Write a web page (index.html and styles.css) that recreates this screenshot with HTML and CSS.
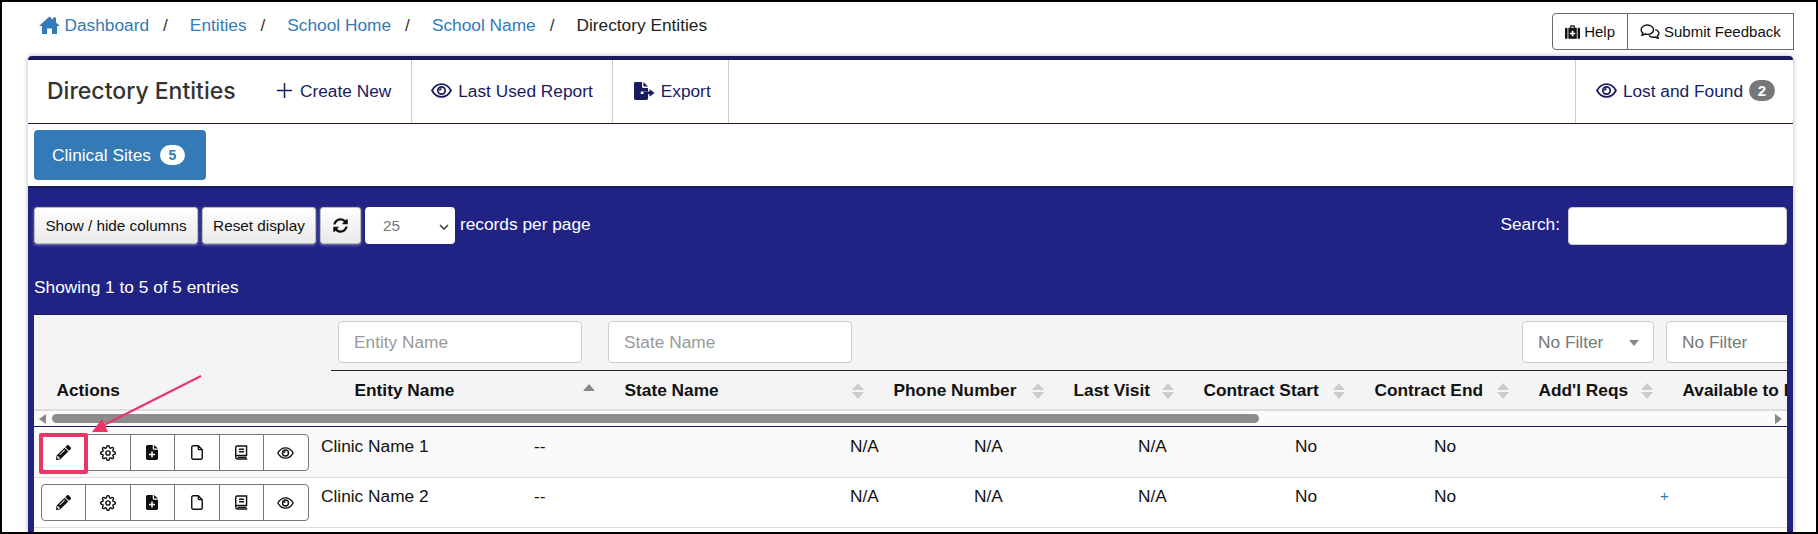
FILE: index.html
```html
<!DOCTYPE html>
<html lang="en">
<head>
<meta charset="utf-8">
<title>Directory Entities</title>
<link rel="stylesheet" href="styles.css">
</head>
<body>
<svg class="defs" xmlns="http://www.w3.org/2000/svg">
  <symbol id="i-home" viewBox="0 0 21 18"><path d="M10.500 .5L0 10h3v8h5v-5.500h5V18h5v-8h3l-4-3.600V1.500h-3v2.300z"/></symbol>
  <symbol id="i-pencil" viewBox="0 0 512 512"><path d="M497.9 142.1l-46.1 46.1c-4.7 4.7-12.3 4.7-17 0l-111-111c-4.7-4.7-4.7-12.3 0-17l46.1-46.1c18.7-18.7 49.1-18.7 67.9 0l60.1 60.1c18.8 18.7 18.8 49.1 0 67.9zM284.2 99.8L21.6 362.4.4 483.9c-2.9 16.4 11.4 30.6 27.8 27.8l121.5-21.3 262.6-262.6c4.7-4.7 4.7-12.3 0-17l-111-111c-4.8-4.7-12.4-4.7-17.1 0zM124.1 339.9c-5.5-5.5-5.5-14.3 0-19.8l154-154c5.5-5.5 14.3-5.5 19.8 0s5.5 14.3 0 19.8l-154 154c-5.5 5.5-14.3 5.5-19.8 0zM88 424h48v36.3l-64.5 11.3-31.1-31.1L51.7 376H88v48z"/></symbol>
  <symbol id="i-sync" viewBox="0 0 512 512"><path d="M370.72 133.28C339.458 104.008 298.888 87.962 255.848 88c-77.458.068-144.328 53.178-162.791 126.85-1.344 5.363-6.122 9.15-11.651 9.15H24.103c-7.498 0-13.194-6.807-11.807-14.176C33.933 94.924 134.813 8 256 8c66.448 0 126.791 26.136 171.315 68.685L463.03 40.97C478.149 25.851 504 36.559 504 57.941V192c0 13.255-10.745 24-24 24H345.941c-21.382 0-32.09-25.851-16.971-40.971l41.75-41.749zM32 296h134.059c21.382 0 32.09 25.851 16.971 40.971l-41.75 41.75c31.262 29.273 71.835 45.319 114.876 45.28 77.418-.07 144.315-53.144 162.787-126.849 1.344-5.363 6.122-9.15 11.651-9.15h57.304c7.498 0 13.193 6.807 11.807 14.176C478.067 417.076 377.187 504 256 504c-66.448 0-126.791-26.136-171.315-68.685L48.97 471.03C33.851 486.149 8 475.441 8 454.059V320c0-13.255 10.745-24 24-24z"/></symbol>
  <symbol id="i-gear" viewBox="0 0 24 24"><g fill="none" stroke="currentColor" stroke-width="2.1" stroke-linecap="round" stroke-linejoin="round"><circle cx="12" cy="12" r="3.2"/><path d="M19.4 15a1.65 1.65 0 0 0 .33 1.82l.06.06a2 2 0 0 1 0 2.83 2 2 0 0 1-2.83 0l-.06-.06a1.65 1.65 0 0 0-1.82-.33 1.65 1.65 0 0 0-1 1.51V21a2 2 0 0 1-2 2 2 2 0 0 1-2-2v-.09A1.65 1.65 0 0 0 9 19.4a1.65 1.65 0 0 0-1.82.33l-.06.06a2 2 0 0 1-2.83 0 2 2 0 0 1 0-2.83l.06-.06a1.65 1.65 0 0 0 .33-1.82 1.65 1.65 0 0 0-1.51-1H3a2 2 0 0 1-2-2 2 2 0 0 1 2-2h.09A1.65 1.65 0 0 0 4.6 9a1.65 1.65 0 0 0-.33-1.82l-.06-.06a2 2 0 0 1 0-2.83 2 2 0 0 1 2.83 0l.06.06a1.65 1.65 0 0 0 1.82.33H9a1.65 1.65 0 0 0 1-1.51V3a2 2 0 0 1 2-2 2 2 0 0 1 2 2v.09a1.65 1.65 0 0 0 1 1.51 1.65 1.65 0 0 0 1.82-.33l.06-.06a2 2 0 0 1 2.83 0 2 2 0 0 1 0 2.83l-.06.06a1.65 1.65 0 0 0-.33 1.82V9a1.65 1.65 0 0 0 1.51 1H21a2 2 0 0 1 2 2 2 2 0 0 1-2 2h-.09a1.65 1.65 0 0 0-1.51 1z"/></g></symbol>
  <symbol id="i-fileplus" viewBox="0 0 16 20"><path d="M2.2 0H9v4.6c0 1 .7 1.6 1.6 1.6H16v11.6c0 1.2-1 2.2-2.2 2.2H2.2C1 20 0 19 0 17.8V2.2C0 1 1 0 2.2 0zM10.6 0L16 4.8h-5.4z"/><path d="M7 8.5h2v3h3v2H9v3H7v-3H4v-2h3z" fill="#fff"/></symbol>
  <symbol id="i-file" viewBox="0 0 16 20"><path d="M3 1h6.8L15 6.2V17a2 2 0 0 1-2 2H3a2 2 0 0 1-2-2V3a2 2 0 0 1 2-2zM9.800 1v4a1.200 1.200 0 0 0 1.200 1.200h4" fill="none" stroke="currentColor" stroke-width="1.9" stroke-linejoin="round"/></symbol>
  <symbol id="i-book" viewBox="0 0 18 20"><g fill="none" stroke="currentColor" stroke-width="2"><path d="M3 1h13v13H3.500A2.500 2.500 0 0 0 1 16.500V3a2 2 0 0 1 2-2z"/><path d="M1 16.500A2.500 2.500 0 0 0 3.500 19H17M5.500 5.500h7M5.500 9h7M3.500 16.500H16"/></g></symbol>
  <symbol id="i-eye" viewBox="0 0 24 17"><path d="M1.200 8.500C3.600 4 7.500 1.200 12 1.200s8.400 2.800 10.800 7.300c-2.400 4.500-6.300 7.300-10.800 7.300S3.600 13 1.200 8.500z" fill="none" stroke="currentColor" stroke-width="2"/><circle cx="12" cy="8.500" r="4.200" fill="none" stroke="currentColor" stroke-width="2"/><path d="M12 5.500a3 3 0 0 0-3 3h2a1 1 0 0 1 1-1z"/></symbol>
  <symbol id="i-export" viewBox="0 0 21 18"><path d="M1.400 0H8v4.600c0 .7.6 1.300 1.300 1.300H14v3.600H7.500a.8.8 0 0 0-.8.8v1a.8.8 0 0 0 .8.8H14v4.500c0 .8-.6 1.400-1.400 1.400H1.400C.6 18 0 17.400 0 16.600V1.400C0 .6.6 0 1.400 0zM9.400 0L14 4.500H9.400z"/><path d="M14 9.500V7l5 3.900-5 3.900v-2.500H8v-2.800z" transform="translate(1.500 0)"/></symbol>
  <symbol id="i-medkit" viewBox="0 0 18 16"><path d="M6 3V1.600C6 .7 6.700 0 7.600 0h2.800c.9 0 1.600.7 1.600 1.600V3h-1.600V1.600H7.600V3z"/><rect x="0" y="3" width="3" height="13" rx="1"/><rect x="15" y="3" width="3" height="13" rx="1"/><path d="M4 3h10v13H4zM8 6.500V9H5.800v1.800H8v2.400h2v-2.400h2.200V9H10V6.500z" fill-rule="evenodd"/></symbol>
  <symbol id="i-comments" viewBox="0 0 22 18"><g fill="none" stroke="currentColor" stroke-width="1.6" stroke-linejoin="round"><path d="M8 1.200C4.200 1.200 1 3.600 1 6.500c0 1.500.8 2.800 2 3.700-.2 1-.7 1.900-1.300 2.600 1.300-.1 2.600-.7 3.600-1.500.9.3 1.800.4 2.700.4 3.800 0 7-2.300 7-5.200S11.800 1.200 8 1.200z"/><path d="M17 6.300c2.300.6 4 2.200 4 4.200 0 1.300-.7 2.400-1.800 3.200.1.900.6 1.700 1.200 2.300-1.200-.1-2.300-.5-3.200-1.300-.8.2-1.500.3-2.200.3-2.200 0-4.200-.9-5.200-2.300"/></g></symbol>
</svg>

<div class="page">
  <div class="topbar">
    <nav class="crumbs">
      <svg class="ico-home"><use href="#i-home"/></svg>
      <a class="crumb" href="#">Dashboard</a><span class="sep">/</span>
      <a class="crumb" href="#">Entities</a><span class="sep">/</span>
      <a class="crumb" href="#">School Home</a><span class="sep">/</span>
      <a class="crumb" href="#">School Name</a><span class="sep">/</span>
      <span class="crumb-current">Directory Entities</span>
    </nav>
    <div class="help-group">
      <button class="help-btn help-left"><svg class="ico-medkit"><use href="#i-medkit"/></svg>Help</button>
      <button class="help-btn help-right"><svg class="ico-comments"><use href="#i-comments"/></svg>Submit Feedback</button>
    </div>
  </div>

  <section class="panel">
    <header class="panel-head">
      <h1 class="title">Directory Entities</h1>
      <a class="head-item head-create" href="#"><svg class="ico-plus" viewBox="0 0 16 16"><path d="M8 0v16M0 8h16"/></svg>Create New</a>
      <a class="head-item head-report" href="#"><svg class="ico-eye"><use href="#i-eye"/></svg>Last Used Report</a>
      <a class="head-item head-export" href="#"><svg class="ico-export"><use href="#i-export"/></svg>Export</a>
      <a class="head-item head-lost" href="#"><svg class="ico-eye"><use href="#i-eye"/></svg>Lost and Found<span class="badge-gray">2</span></a>
    </header>

    <div class="tabs">
      <a class="tab" href="#">Clinical Sites<span class="badge-white">5</span></a>
    </div>

    <div class="band">
      <div class="toolbar">
        <button class="tool-btn tool-show">Show / hide columns</button>
        <button class="tool-btn tool-reset">Reset display</button>
        <button class="tool-btn tool-sync"><svg class="ico-sync"><use href="#i-sync"/></svg></button>
        <div class="per-wrap">
          <select class="per-page"><option>25</option></select>
          <svg class="per-chevron" viewBox="0 0 10 6"><path d="M1 1l4 4 4-4"/></svg>
        </div>
        <span class="per-label">records per page</span>
        <label class="search">Search:<input class="search-input" type="text"></label>
      </div>
      <div class="info">Showing 1 to 5 of 5 entries</div>

      <div class="table">
        <div class="head-grid filter-row">
          <div></div>
          <div class="fcell"><input class="filter f-entity" placeholder="Entity Name"></div>
          <div class="fcell"><input class="filter f-state" placeholder="State Name"></div>
          <div></div><div></div><div></div><div></div>
          <div class="fcell"><div class="filter f-select">No Filter<span class="caret"></span></div></div>
          <div class="fcell"><div class="filter f-wide">No Filter</div></div>
        </div>
        <div class="head-grid label-row">
          <div class="th th-first">Actions</div>
          <div class="th">Entity Name<span class="sort-up"></span></div>
          <div class="th">State Name<span class="sort"></span></div>
          <div class="th">Phone Number<span class="sort"></span></div>
          <div class="th">Last Visit<span class="sort"></span></div>
          <div class="th">Contract Start<span class="sort"></span></div>
          <div class="th">Contract End<span class="sort"></span></div>
          <div class="th">Add'l Reqs<span class="sort"></span></div>
          <div class="th th-last">Available to Pre-Reg</div>
        </div>
        <div class="scroller">
          <span class="arrow-left"></span>
          <span class="thumb"></span>
          <span class="arrow-right"></span>
        </div>
        <div class="rows">
          <div class="row row-odd">
            <div class="actions">
              <a class="act" href="#"><svg class="a-pencil"><use href="#i-pencil"/></svg></a>
              <a class="act" href="#"><svg class="a-gear"><use href="#i-gear"/></svg></a>
              <a class="act" href="#"><svg class="a-file"><use href="#i-fileplus"/></svg></a>
              <a class="act" href="#"><svg class="a-file"><use href="#i-file"/></svg></a>
              <a class="act" href="#"><svg class="a-book"><use href="#i-book"/></svg></a>
              <a class="act" href="#"><svg class="a-eye"><use href="#i-eye"/></svg></a>
            </div>
            <div class="td">Clinic Name 1</div><div class="td dash">--</div><div class="td">N/A</div><div class="td">N/A</div><div class="td">N/A</div><div class="td">No</div><div class="td">No</div><div class="td"></div>
          </div>
          <div class="row">
            <div class="actions">
              <a class="act" href="#"><svg class="a-pencil"><use href="#i-pencil"/></svg></a>
              <a class="act" href="#"><svg class="a-gear"><use href="#i-gear"/></svg></a>
              <a class="act" href="#"><svg class="a-file"><use href="#i-fileplus"/></svg></a>
              <a class="act" href="#"><svg class="a-file"><use href="#i-file"/></svg></a>
              <a class="act" href="#"><svg class="a-book"><use href="#i-book"/></svg></a>
              <a class="act" href="#"><svg class="a-eye"><use href="#i-eye"/></svg></a>
            </div>
            <div class="td">Clinic Name 2</div><div class="td dash">--</div><div class="td">N/A</div><div class="td">N/A</div><div class="td">N/A</div><div class="td">No</div><div class="td">No</div><div class="td td-plus">+</div>
          </div>
        </div>
      </div>
    </div>
  </section>
</div>

<div class="highlight"></div>
<svg class="callout" viewBox="0 0 130 70"><path class="callout-line" d="M111 3L10 54"/><path class="callout-head" d="M2 59L12 46 18 59z"/></svg>
</body>
</html>
```

FILE: styles.css
```css
* { box-sizing: border-box; }
html, body { margin: 0; }
html { height: 534px; overflow: hidden; }
body {
  position: relative;
  height: 534px;
  overflow: hidden;
  border: 2px solid #000;
  background: #fff;
  color: #111;
  font-family: "Liberation Sans", Arial, sans-serif;
  font-size: 17.3px;
  line-height: 20px;
}
a { text-decoration: none; }
.defs { display: none; }
.page { padding: 0 23px 0 26px; }

/* top bar */
.topbar { display: flex; justify-content: space-between; height: 54px; padding-top: 11px; }
.crumbs { display: flex; align-items: flex-start; padding: 2px 0 0 11px; }
.ico-home { width: 21px; height: 18px; margin: 1px 4.5px 0 0; fill: #337ab7; }
.crumb { color: #337ab7; }
.crumb-current { color: #222; }
.sep { margin: 0 22px 0 14px; color: #333; }
.help-group { display: flex; height: 37px; margin-right: -1px; }
.help-btn {
  display: flex; align-items: center; height: 37px; padding: 0 12px;
  background: #fff; border: 1px solid #666; color: #111;
  font: 15px "Liberation Sans", Arial, sans-serif;
}
.help-left { width: 76px; border-radius: 4px 0 0 4px; }
.help-right { width: 166px; border-left: 0; }
.ico-medkit { width: 16px; height: 14px; margin-right: 4px; fill: #111; }
.ico-comments { width: 20px; height: 16px; margin-right: 4px; color: #111; }

/* panel */
.panel {
  border-top: 4px solid #191b5f;
  border-radius: 4px 4px 0 0;
  box-shadow: 0 0 5px rgba(0, 0, 0, .3);
  background: #fff;
}
.panel-head { display: flex; height: 64px; border-bottom: 1px solid #191b5f; }
.title {
  width: 249px; margin: 0; padding: 0 0 2px 19px;
  align-self: center;
  font: 500 23px Inter, "Noto Sans", sans-serif;
  color: #333;
}
.head-item {
  display: flex; align-items: center; gap: 6px;
  padding: 0 19px 2px 20px;
  border-right: 1px solid #ccc;
  color: #191b5f;
}
.head-create { gap: 8px; padding: 0 20px 2px 0; }
.head-report { padding-left: 19px; }
.head-export { padding: 0 17px 2px 21px; }
.head-lost { margin-left: auto; padding: 0 18px 2px 20px; border-right: 0; border-left: 1px solid #ccc; }
.ico-plus { width: 15px; height: 15px; fill: none; stroke: #191b5f; stroke-width: 1.6; }
.ico-eye { width: 21px; height: 15px; fill: #191b5f; color: #191b5f; }
.ico-export { width: 21px; height: 18px; fill: #191b5f; }
.badge-gray {
  display: inline-flex; align-items: center; justify-content: center;
  width: 26px; height: 21px; border-radius: 11px;
  background: #777; color: #fff; font-size: 15px; font-weight: 700;
}
.tabs { height: 62px; padding: 6px 0 6px 6px; }
.tab {
  display: inline-flex; align-items: center; gap: 9px;
  height: 50px; width: 172px; padding-left: 18px;
  background: #337ab7; border-radius: 4px; color: #fff;
}
.badge-white {
  display: inline-flex; align-items: center; justify-content: center;
  width: 25px; height: 20px; border-radius: 10px;
  background: #fff; color: #337ab7; font-size: 14px; font-weight: 700;
}

/* band */
.band { border-top: 2px solid #191b5f; background: #202383; padding: 19px 6px 0; color: #fff; height: 346px; overflow: hidden; }
.toolbar { display: flex; align-items: flex-start; height: 38px; }
.tool-btn {
  height: 37px; margin-right: 4px; padding: 0;
  background: linear-gradient(#fff, #e9e9e9);
  border: 1px solid #bbb; border-radius: 3px;
  box-shadow: 0 1px 3px rgba(255, 255, 255, .45);
  color: #111;
  font: 15.3px "Liberation Sans", Arial, sans-serif;
}
.tool-show { width: 164px; }
.tool-reset { width: 114px; }
.tool-sync { width: 41px; display: flex; align-items: center; justify-content: center; }
.ico-sync { width: 15px; height: 15px; fill: #111; }
.per-wrap { position: relative; width: 90px; height: 37px; }
.per-page {
  display: block; width: 90px; height: 37px; padding-left: 18px; border: 0; border-radius: 4px;
  appearance: none;
  background: #fff; color: #777;
  font: 15.3px "Liberation Sans", Arial, sans-serif;
}
.per-chevron { position: absolute; right: 6px; top: 17px; width: 10px; height: 6px; fill: none; stroke: #444; stroke-width: 1.7; }
.per-label { margin: 7px 0 0 5px; }
.search { display: flex; align-items: flex-start; margin-left: auto; padding-top: 7px; gap: 8px; }
.search-input { width: 219px; height: 38px; margin-top: -7px; border: 1px solid #ccc; border-radius: 4px; background: #fff; }
.info { margin-top: 32px; height: 37px; line-height: 20px; }

/* table */
.table { width: 1753px; height: 218px; overflow: hidden; background: #fff; color: #111; border-top: 1px solid #191b5f; }
.head-grid { display: grid; grid-template-columns: 297px 270px 269px 180px 130px 171px 164px 144px 300px; width: 2125px; background: #f4f4f4; }
.filter-row { height: 55px; }
.fcell { padding: 6px 0 0 7px; }
.filter {
  display: flex; align-items: center; position: relative;
  height: 42px; padding: 0 15px;
  background: #fff; border: 1px solid #ccc; border-radius: 4px;
  color: #777;
  font: 17.3px "Liberation Sans", Arial, sans-serif;
}
.filter::placeholder { color: #999; }
.f-entity { width: 244px; }
.f-state { width: 244px; }
.f-select { width: 132px; }
.f-wide { width: 220px; }
.caret { position: absolute; right: 14px; top: 18px; border: 5px solid transparent; border-top: 6px solid #888; border-bottom: 0; }
.label-row { height: 41px; border-bottom: 2px solid #ddd; }
.th {
  display: flex; align-items: center; justify-content: space-between;
  height: 39px; padding: 0 6px 0 23.5px;
  border-top: 1px solid #222;
  font-weight: 700; white-space: nowrap;
}
.th-first { padding-left: 22.5px; border-top: 0; }
.th-last { justify-content: flex-start; }
.sort, .sort-up { display: block; width: 12px; position: relative; }
.sort { height: 16px; margin-top: 2px; }
.sort::before, .sort::after, .sort-up::before {
  content: ""; position: absolute; left: 0;
  border-left: 6px solid transparent; border-right: 6px solid transparent;
}
.sort::before { top: 0; border-bottom: 7px solid #ccc; }
.sort::after { bottom: 0; border-top: 7px solid #ccc; }
.sort-up { height: 7px; margin-top: -6px; }
.sort-up::before { top: 0; border-bottom: 7px solid #888; }

.scroller {
  display: flex; align-items: center;
  height: 16px; padding: 0 5px; background: #fafafa;
  border-bottom: 1px solid #191b5f;
}
.arrow-left { border: 5px solid transparent; border-left: 0; border-right: 7px solid #888; }
.thumb { width: 1207px; height: 9px; margin-left: 6px; border-radius: 5px; background: #8c8c8c; }
.arrow-right { margin-left: auto; border: 5px solid transparent; border-right: 0; border-left: 7px solid #888; }

.rows { background: #fff; padding-top: 1px; }
.row {
  display: grid;
  grid-template-columns: 279px 213px 316px 124px 164px 157px 139px 226px 100px;
  height: 50px; background: #fff;
  border-bottom: 1px solid #ddd;
}
.row-odd { background: #f9f9f9; }
.actions {
  display: flex; align-self: start;
  width: 268px; height: 37px; margin: 6px 0 0 6.5px;
  background: #fff; border: 1px solid #777; border-radius: 4px;
}
.act {
  display: flex; flex: 1; align-items: center; justify-content: center;
  border-left: 1px solid #777; color: #111; fill: #111;
}
.act:first-child { border-left: 0; }
.a-pencil { width: 15px; height: 15px; }
.a-gear { width: 16px; height: 16px; }
.a-file { width: 12px; height: 15px; }
.a-book { width: 13px; height: 15px; }
.a-eye { width: 17px; height: 12px; }
.td { padding: 8px 0 0 8px; }
.td-plus { color: #337ab7; font-size: 15px; }

/* callout annotation */
.highlight {
  position: absolute; left: 37px; top: 431px;
  width: 49px; height: 41px;
  border: 4px solid #ea3566; border-radius: 2px;
}
.callout {
  position: absolute; left: 88px; top: 371px;
  width: 130px; height: 70px;
}
.callout-line { fill: none; stroke: #ea3566; stroke-width: 2; }
.callout-head { fill: #ea3566; }
```
